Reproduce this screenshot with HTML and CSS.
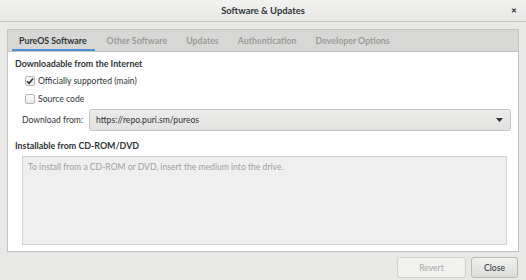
FILE: index.html
```html
<!DOCTYPE html>
<html>
<head>
<meta charset="utf-8">
<link rel="stylesheet" href="styles.css">
</head>
<body>
<div class="window">
  <div class="titlebar">
    <span class="title">Software &amp; Updates</span>
    <span class="close">&#x2715;</span>
  </div>
  <div class="main">
    <div class="notebook">
      <div class="tabs">
        <div class="tab active">PureOS Software</div>
        <div class="tab">Other Software</div>
        <div class="tab">Updates</div>
        <div class="tab">Authentication</div>
        <div class="tab">Developer Options</div>
      </div>
      <div class="page">
        <div class="heading">Downloadable from the Internet</div>
        <label class="check-row">
          <span class="checkbox checked">
            <svg width="8" height="8" viewBox="0 0 8 8"><path d="M1 4.2 L3.1 6.3 L7 1.6" fill="none" stroke="#2e3436" stroke-width="1.6"/></svg>
          </span>
          <span>Officially supported (main)</span>
        </label>
        <label class="check-row">
          <span class="checkbox"></span>
          <span>Source code</span>
        </label>
        <div class="download-row">
          <span class="dl-label">Download from:</span>
          <div class="combo">
            <span>https://repo.puri.sm/pureos</span>
            <svg width="7" height="4" viewBox="0 0 7 4"><path d="M0 0 H7 L3.5 4 Z" fill="#2e3436"/></svg>
          </div>
        </div>
        <div class="heading heading2">Installable from CD-ROM/DVD</div>
        <div class="cdbox">To install from a CD-ROM or DVD, insert the medium into the drive.</div>
      </div>
    </div>
    <div class="footer">
      <button class="btn disabled">Revert</button>
      <button class="btn">Close</button>
    </div>
  </div>
</div>
</body>
</html>
```
FILE: styles.css
```css
* { box-sizing: border-box; }
html, body { margin: 0; padding: 0; }
body {
  width: 526px;
  height: 280px;
  overflow: hidden;
  font-family: Lato, "Open Sans", sans-serif;
  font-size: 8.6px;
  color: #2e3436;
  background: #e8e8e7;
}
.window { height: 280px; display: flex; flex-direction: column; }
.titlebar {
  height: 22px;
  flex: none;
  display: flex;
  align-items: center;
  justify-content: center;
  position: relative;
  background: linear-gradient(#f2f2f1, #e8e8e7);
  border-bottom: 1px solid #c6c6c4;
}
.title { font-weight: bold; font-size: 9.4px; color: #2e3436; }
.close {
  position: absolute;
  right: 9px;
  top: 6px;
  font-size: 7px;
  font-weight: bold;
  color: #2e3436;
}
.main { flex: 1; padding: 7px 7px 0 7px; display: flex; flex-direction: column; }
.notebook {
  border: 1px solid #c3c3c1;
  background: #fff;
  display: flex;
  flex-direction: column;
  height: 223px;
}
.tabs {
  height: 22px;
  background: #d7d7d5;
  border-bottom: 1px solid #c3c3c1;
  display: flex;
  padding-left: 4px;
  gap: 5px;
  font-size: 8.8px;
}
.tab {
  padding: 0 7px;
  display: flex;
  align-items: center;
  font-weight: bold;
  color: #9a9c9a;
  border-bottom: 2px solid transparent;
  padding-top: 2px;
}
.tab.active { color: #2e3436; border-bottom-color: #4a90d9; padding-right: 8px; }
.page { padding: 6px 7px 0 7px; flex: 1; display: flex; flex-direction: column; }
.heading { font-weight: bold; height: 12px; line-height: 12px; font-size: 8.9px; }
.check-row {
  display: flex;
  align-items: center;
  gap: 3px;
  padding-left: 10px;
  height: 18px;
}
.check-row:first-of-type { margin-top: 2px; }
.checkbox {
  width: 10px;
  height: 10px;
  border: 1px solid #b6b6b3;
  border-radius: 2px;
  background: linear-gradient(#fafafa, #ececeb);
  display: flex;
  align-items: center;
  justify-content: center;
}
.download-row {
  display: flex;
  align-items: center;
  padding-left: 7px;
  height: 23px;
}
.dl-label { width: 67px; }
.combo {
  flex: 1;
  height: 22px;
  border: 1px solid #c3c3c1;
  border-radius: 3px;
  background: linear-gradient(#ececeb, #e2e2e1);
  display: flex;
  align-items: center;
  justify-content: space-between;
  padding: 0 7px 0 6px;
}
.heading2 { margin-top: 9px; }
.cdbox {
  margin: 4px 4px 0 7px;
  height: 89px;
  border: 1px solid #d3d3d1;
  background: #efefef;
  color: #a0a2a0;
  padding: 5px 5px;
}
.footer {
  display: flex;
  justify-content: flex-end;
  gap: 5px;
  padding: 5px 1px 0 0;
}
.btn {
  font-family: inherit;
  font-size: 8.6px;
  height: 21px;
  border: 1px solid #b9b9b7;
  border-radius: 3px;
  background: linear-gradient(#f1f1f0, #dcdcdb);
  color: #2e3436;
  padding: 0;
}
.btn.disabled { width: 69px; color: #a6a8a6; background: #f1f1f0; border-color: #cfcfcd; }
.btn:last-child { width: 47px; }
```
